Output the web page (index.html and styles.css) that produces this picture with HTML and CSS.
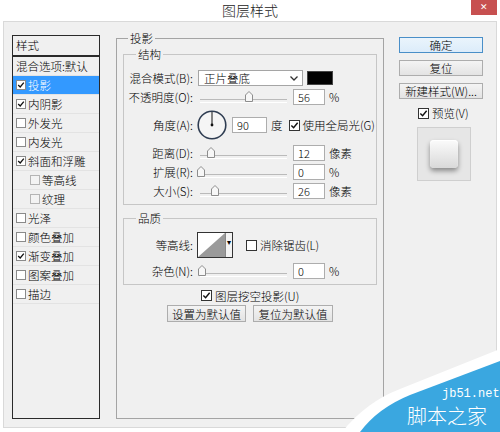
FILE: index.html
```html
<!DOCTYPE html>
<html lang="zh-CN">
  <head>
    <meta charset="UTF-8" />
    <meta name="viewport" content="width=device-width, initial-scale=1.0" />
    <title>图层样式</title>
    <link rel="stylesheet" href="styles.css">
  </head>
  <body>
    <div id="window">
      <div id="titlebar">
        <span></span>
        <div class="title">图层样式</div>
        <button class="close">✕</button>
      </div>

      <div id="dialog">
        <div id="styles">
          <div class="list-head">样式</div>
          <div class="list-item">混合选项:默认</div>
          <div class="list-item selected"><span class="cb on"><svg viewBox="0 0 10 10"><path d="M1.5 5 4 7.5 8.5 2" /></svg></span>投影</div>
          <div class="list-item"><span class="cb on"><svg viewBox="0 0 10 10"><path d="M1.5 5 4 7.5 8.5 2" /></svg></span>内阴影</div>
          <div class="list-item"><span class="cb"></span>外发光</div>
          <div class="list-item"><span class="cb"></span>内发光</div>
          <div class="list-item"><span class="cb on"><svg viewBox="0 0 10 10"><path d="M1.5 5 4 7.5 8.5 2" /></svg></span>斜面和浮雕</div>
          <div class="list-item sub"><span class="cb"></span>等高线</div>
          <div class="list-item sub"><span class="cb"></span>纹理</div>
          <div class="list-item"><span class="cb"></span>光泽</div>
          <div class="list-item"><span class="cb"></span>颜色叠加</div>
          <div class="list-item"><span class="cb on"><svg viewBox="0 0 10 10"><path d="M1.5 5 4 7.5 8.5 2" /></svg></span>渐变叠加</div>
          <div class="list-item"><span class="cb"></span>图案叠加</div>
          <div class="list-item"><span class="cb"></span>描边</div>
        </div>

        <fieldset class="panel">
          <legend>投影</legend>

          <fieldset class="group">
            <legend>结构</legend>
            <div class="row r-blend">
              <span class="lbl">混合模式(B):</span>
              <div class="select">
                <span>正片叠底</span>
                <svg width="8" height="5" viewBox="0 0 8 5"><path d="M0.5 0.5 4 4 7.5 0.5" /></svg>
              </div>
              <div class="color"></div>
            </div>
            <div class="row r-opacity">
              <span class="lbl">不透明度(O):</span>
              <div class="slider"><span class="thumb" style="left: 48px"><svg width="8" height="11" viewBox="0 0 8 11"><path d="M4 0.5 7.5 4 7.5 10.5 0.5 10.5 0.5 4Z" /></svg></span></div>
              <input class="num" value="56" />
              <span class="unit">%</span>
            </div>
            <div class="row r-angle">
              <span class="lbl">角度(A):</span>
              <svg class="dial" width="30" height="30" viewBox="0 0 30 30">
                <circle cx="15" cy="15" r="13.8" />
                <line x1="15" y1="15" x2="15" y2="2" />
                <circle class="dot" cx="15" cy="15" r="1.4" />
              </svg>
              <input class="num wide" value="90" />
              <span class="unit">度</span>
              <span class="cb dark on"><svg viewBox="0 0 10 10"><path d="M1.5 5 4 7.5 8.5 2" /></svg></span>
              <span class="cb-text">使用全局光(G)</span>
            </div>
            <div class="row r-small">
              <span class="lbl">距离(D):</span>
              <div class="slider"><span class="thumb" style="left: 10px"><svg width="8" height="11" viewBox="0 0 8 11"><path d="M4 0.5 7.5 4 7.5 10.5 0.5 10.5 0.5 4Z" /></svg></span></div>
              <input class="num" value="12" />
              <span class="unit">像素</span>
            </div>
            <div class="row r-small">
              <span class="lbl">扩展(R):</span>
              <div class="slider"><span class="thumb" style="left: 0px"><svg width="8" height="11" viewBox="0 0 8 11"><path d="M4 0.5 7.5 4 7.5 10.5 0.5 10.5 0.5 4Z" /></svg></span></div>
              <input class="num" value="0" />
              <span class="unit">%</span>
            </div>
            <div class="row r-small">
              <span class="lbl">大小(S):</span>
              <div class="slider"><span class="thumb" style="left: 14px"><svg width="8" height="11" viewBox="0 0 8 11"><path d="M4 0.5 7.5 4 7.5 10.5 0.5 10.5 0.5 4Z" /></svg></span></div>
              <input class="num" value="26" />
              <span class="unit">像素</span>
            </div>
          </fieldset>

          <fieldset class="group quality">
            <legend>品质</legend>
            <div class="row r-contour">
              <span class="lbl">等高线:</span>
              <div class="contour">
                <svg width="27" height="24" viewBox="0 0 27 24"><path d="M0 24 27 0 27 24Z" /></svg>
                <span class="drop">▾</span>
              </div>
              <span class="cb dark anti"></span>
              <span class="cb-text">消除锯齿(L)</span>
            </div>
            <div class="row r-noise">
              <span class="lbl">杂色(N):</span>
              <div class="slider"><span class="thumb" style="left: 1px"><svg width="8" height="11" viewBox="0 0 8 11"><path d="M4 0.5 7.5 4 7.5 10.5 0.5 10.5 0.5 4Z" /></svg></span></div>
              <input class="num" value="0" />
              <span class="unit">%</span>
            </div>
          </fieldset>

          <div class="knockout">
            <span class="cb dark on"><svg viewBox="0 0 10 10"><path d="M1.5 5 4 7.5 8.5 2" /></svg></span>
            <span class="cb-text">图层挖空投影(U)</span>
          </div>
          <div class="defaults">
            <button class="btn">设置为默认值</button>
            <button class="btn">复位为默认值</button>
          </div>
        </fieldset>

        <div id="actions">
          <button class="btn main default">确定</button>
          <button class="btn main">复位</button>
          <button class="btn main">新建样式(W)...</button>
          <div class="preview-check">
            <span class="cb dark on"><svg viewBox="0 0 10 10"><path d="M1.5 5 4 7.5 8.5 2" /></svg></span>
            <span class="cb-text">预览(V)</span>
          </div>
          <div class="preview">
            <div class="preview-tile"></div>
          </div>
        </div>
      </div>

      <div class="watermark">
        <svg width="180" height="92" viewBox="0 0 180 92">
          <path class="wm-white" d="M22 92 Q46 62 80 49 L180 9 L180 92Z" />
          <path class="wm-blue" d="M40 92 Q58 68 90 55 L180 21 L180 92Z" />
          <text class="wm-site" x="122" y="57">jb51.net</text>
          <text class="wm-name" x="87" y="84">脚本之家</text>
        </svg>
      </div>
    </div>
  </body>
</html>
```

FILE: styles.css
```css
* {
  box-sizing: border-box;
}
body {
  margin: 0;
  font-family: "Noto Sans CJK SC", sans-serif;
  font-size: 11.5px;
  font-weight: 300;
  color: #000;
  background-color: #fff;
}
#window {
  position: relative;
  width: 500px;
  height: 432px;
  overflow: hidden;
}
#titlebar {
  display: grid;
  grid-template-columns: 1fr auto 1fr;
  height: 21px;
}
.title {
  font-size: 14px;
  line-height: 21px;
  color: #222;
}
.close {
  justify-self: end;
  width: 26px;
  height: 15px;
  margin-right: 3px;
  padding: 0;
  border: none;
  background-color: #c75050;
  color: #fff;
  font-size: 9px;
  line-height: 15px;
}
#dialog {
  display: flex;
  align-items: flex-start;
  height: 407px;
  margin: 0 3px;
  padding-top: 9px;
  background-color: #f0f0f0;
  border: 1px solid #d9d9d9;
}

/* style list */
#styles {
  flex: none;
  width: 88px;
  height: 384px;
  margin: 4px 0 0 8px;
  border: 1px solid #2a2a2a;
}
.list-head {
  height: 21px;
  padding-left: 3px;
  line-height: 19px;
  border-bottom: 2px solid #2a2a2a;
}
.list-item {
  display: flex;
  align-items: center;
  height: 19px;
  padding-left: 3px;
  border-bottom: 1px solid #e3e3e3;
  white-space: nowrap;
}
.list-item.sub {
  padding-left: 17px;
}
.list-item.selected {
  background-color: #3399ff;
  color: #fff;
}
.cb {
  flex: none;
  display: flex;
  width: 10px;
  height: 10px;
  margin-right: 2px;
  border: 1px solid #8a8a8a;
  background-color: #fff;
}
.sub .cb {
  border-color: #b4b4b4;
  background-color: #f3f3f3;
}
.cb svg {
  width: 100%;
  height: 100%;
  fill: none;
  stroke: #111;
  stroke-width: 1.6;
}
.cb.dark {
  width: 11px;
  height: 11px;
  border-color: #333;
}

/* main panel */
fieldset {
  margin: 0;
  min-width: 0;
}
legend {
  padding: 0 2px;
  line-height: 14px;
}
.panel {
  flex: none;
  width: 268px;
  height: 388px;
  margin-left: 16px;
  padding: 0 6px;
  border: 1px solid #a4a4a4;
}
.panel > legend {
  margin-left: 5px;
}
.group {
  margin-top: 2px;
  padding: 8px 4px 4px 4px;
  border: 1px solid #c6c6c6;
}
.group > legend {
  margin-left: 8px;
}
.group.quality {
  margin-top: 6px;
  padding-top: 4px;
  padding-bottom: 3px;
}
.row {
  display: flex;
  align-items: center;
  white-space: nowrap;
}
.r-blend {
  height: 18px;
}
.r-opacity {
  height: 20px;
}
.r-angle {
  height: 36px;
}
.r-small {
  height: 19px;
}
.r-contour {
  height: 32px;
}
.r-noise {
  height: 20px;
}
.lbl {
  flex: none;
  width: 65px;
  text-align: right;
}
.select {
  display: flex;
  align-items: center;
  justify-content: space-between;
  width: 105px;
  height: 16px;
  margin-left: 5px;
  padding: 0 4px 0 5px;
  border: 1px solid #a5a5a5;
  background-color: #fff;
}
.select svg {
  fill: none;
  stroke: #333;
  stroke-width: 1.3;
}
.color {
  width: 26px;
  height: 14px;
  margin-left: 4px;
  background-color: #000;
  border: 1px solid #444;
}
.slider {
  position: relative;
  flex: none;
  width: 90px;
  height: 12px;
  margin-left: 4px;
}
.slider::before {
  content: "";
  position: absolute;
  left: 3px;
  right: 0;
  top: 8px;
  height: 2px;
  border-top: 1px solid #bababa;
  border-bottom: 1px solid #fff;
}
.thumb {
  position: absolute;
  top: 0;
  display: flex;
}
.thumb svg {
  fill: #f7f7f7;
  stroke: #8d8d8d;
}
.num {
  flex: none;
  width: 32px;
  height: 16px;
  margin: 0 0 0 6px;
  padding: 0 0 0 4px;
  border: 1px solid #adadad;
  background-color: #fff;
  font-family: "Noto Sans CJK SC", sans-serif;
  font-size: 11px;
  font-weight: 300;
  color: #000;
}
.num.wide {
  width: 35px;
  margin-left: 5px;
}
.unit {
  margin-left: 4px;
}
.dial {
  flex: none;
  margin-left: 4px;
}
.dial circle {
  fill: #f5f5f5;
  stroke: #2f3d52;
  stroke-width: 1.6;
}
.dial .dot {
  fill: #111;
  stroke: none;
}
.dial line {
  stroke: #111;
  stroke-width: 1;
}
.r-angle .cb {
  margin-left: 6px;
}
.cb-text {
  margin-left: 1px;
}
.contour {
  display: flex;
  height: 26px;
  margin-left: 4px;
  border: 1px solid #333;
  background-color: #fff;
}
.contour svg {
  fill: #9a9a9a;
}
.drop {
  width: 7px;
  border-left: 1px solid #888;
  background-color: #f3f3f3;
  font-size: 8px;
  line-height: 18px;
  text-align: center;
}
.r-contour .cb {
  margin-left: 13px;
}
.knockout {
  display: flex;
  align-items: center;
  height: 15px;
  margin-top: 3px;
  padding-left: 78px;
}
.defaults {
  display: flex;
  gap: 7px;
  margin-top: 2px;
  padding-left: 44px;
}
.btn {
  height: 17px;
  padding: 0;
  border: 1px solid #adadad;
  background: linear-gradient(#f4f4f4, #e3e3e3);
  font-family: "Noto Sans CJK SC", sans-serif;
  font-size: 11.5px;
  font-weight: 300;
  line-height: 14px;
  color: #000;
}
.defaults .btn {
  width: 79px;
}
.defaults .btn + .btn {
  width: 80px;
}

/* right column */
#actions {
  flex: none;
  width: 84px;
  margin: 6px 0 0 15px;
}
.btn.main {
  display: block;
  width: 84px;
  height: 16px;
  margin-bottom: 7px;
}
.btn.default {
  border-color: #4a8fc8;
  background: linear-gradient(#eaf4fc, #dcecfa);
}
.preview-check {
  display: flex;
  align-items: center;
  height: 14px;
  margin-top: 6px;
  padding-left: 19px;
}
.preview {
  display: flex;
  align-items: center;
  justify-content: center;
  width: 54px;
  height: 54px;
  margin: 7px 0 0 18px;
  border: 1px solid #cfcfcf;
  background-color: #e6e6e6;
}
.preview-tile {
  width: 28px;
  height: 28px;
  border-radius: 4px;
  background: linear-gradient(#fbfbfb, #d9d9d9);
  box-shadow: 0 3px 5px rgba(0, 0, 0, 0.4), inset 0 1px 1px #fff;
}

/* watermark */
.watermark {
  position: absolute;
  right: 0;
  bottom: 0;
  width: 180px;
  height: 92px;
}
.watermark svg {
  display: block;
}
.wm-white {
  fill: #fff;
}
.wm-blue {
  fill: #3aa7e0;
}
.wm-site {
  fill: #fff;
  font-family: "Liberation Mono", monospace;
  font-size: 12px;
}
.wm-name {
  fill: #fff;
  font-family: "Noto Sans CJK SC", sans-serif;
  font-size: 20px;
  font-weight: 300;
}
```
